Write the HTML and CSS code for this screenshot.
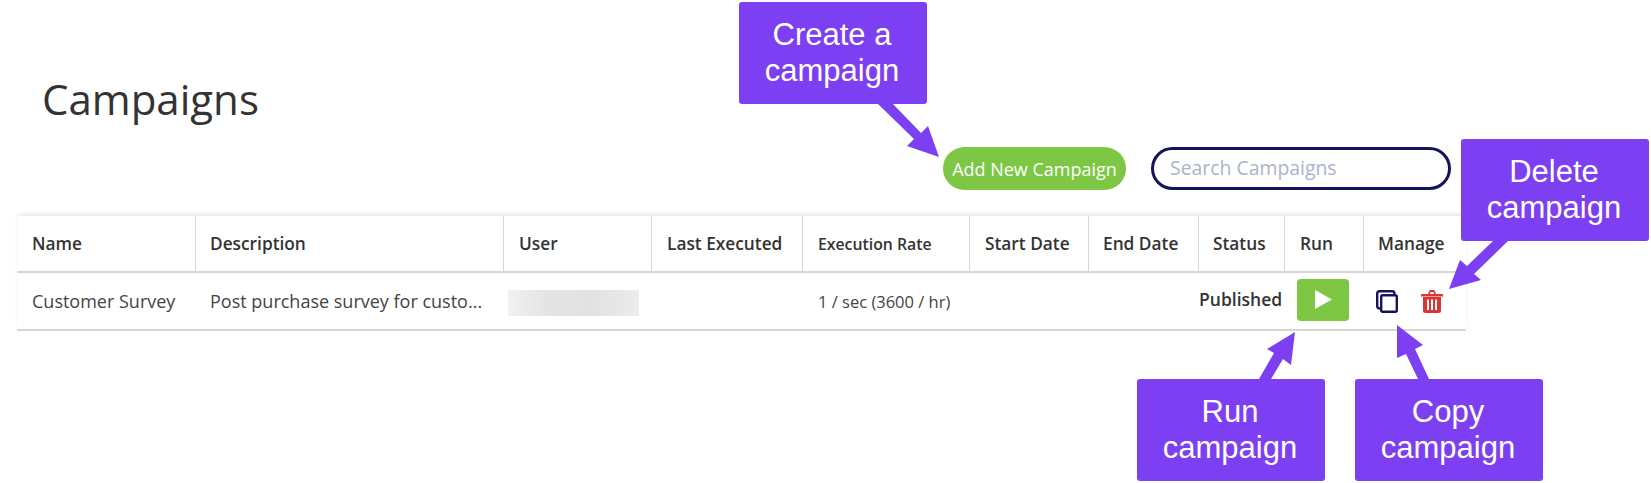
FILE: index.html
```html
<!DOCTYPE html>
<html lang="en">
<head>
<meta charset="utf-8">
<title>Campaigns</title>
<link rel="stylesheet" href="styles.css">
</head>
<body>
<main class="page">
  <h1 class="title">Campaigns</h1>
  <div class="toolbar">
    <button class="add-btn" type="button">Add New Campaign</button>
    <input class="search" type="text" placeholder="Search Campaigns">
  </div>
  <table class="table">
    <colgroup>
      <col class="c-name"><col class="c-desc"><col class="c-user"><col class="c-last"><col class="c-rate">
      <col class="c-start"><col class="c-end"><col class="c-status"><col class="c-run"><col class="c-manage">
    </colgroup>
    <thead>
      <tr>
        <th>Name</th><th class="desc">Description</th><th>User</th><th>Last Executed</th><th class="small">Execution Rate</th>
        <th>Start Date</th><th class="end">End Date</th><th class="end">Status</th><th>Run</th><th class="end">Manage</th>
      </tr>
    </thead>
    <tbody>
      <tr>
        <td>Customer Survey</td>
        <td class="desc">Post purchase survey for custo...</td>
        <td class="user-cell"><div class="blur-box"><div class="blur"></div></div></td>
        <td></td>
        <td class="rate">1 / sec (3600 / hr)</td>
        <td></td>
        <td></td>
        <td class="status">Published</td>
        <td class="run-cell">
          <button class="run-btn" type="button" aria-label="Run">
            <svg width="17" height="19" viewBox="0 0 17 19"><path d="M0 0 L17 9.5 L0 19 Z" fill="#fff"/></svg>
          </button>
        </td>
        <td class="manage-cell">
          <div class="manage">
            <svg class="ic-copy" width="22" height="23" viewBox="0 0 22 23" fill="none" stroke="#14145a" stroke-width="2.4">
              <path d="M4 18.5 H3.5 A2.5 2.5 0 0 1 1.2 16 V3.5 A2.5 2.5 0 0 1 3.5 1.2 H16 A2.5 2.5 0 0 1 18.5 3.5 V5"/>
              <rect x="5.2" y="5.2" width="15.6" height="16.6" rx="1.5"/>
            </svg>
            <svg class="ic-trash" width="22" height="23" viewBox="0 0 22 23">
              <path fill="#dc3535" d="M7 4 L8 1.2 Q8.4 0 9.7 0 H12.3 Q13.6 0 14 1.2 L15 4 H21 Q22 4 22 5 V6.4 H0 V5 Q0 4 1 4 Z M9 4 H13 L12.4 2 H9.6 Z"/>
              <path fill="#dc3535" d="M2 7 H20 V20.5 Q20 23 17.5 23 H4.5 Q2 23 2 20.5 Z"/>
              <path fill="#fff" d="M6 9.5 H8 V20 H6 Z M10 9.5 H12 V20 H10 Z M14 9.5 H16 V20 H14 Z"/>
            </svg>
          </div>
        </td>
      </tr>
    </tbody>
  </table>
</main>

<svg class="arrows" width="1651" height="483" viewBox="0 0 1651 483" aria-hidden="true">
  <polygon points="878,104 893,104 921,133 928,126 939,157 907,146 914,139"/>
  <polygon points="1493,241 1508,241 1474,274 1481,280 1449,289 1460,260 1467,266"/>
  <polygon points="1259,379 1271,379 1283,359 1291,365 1295,332 1267,349 1274,353"/>
  <polygon points="1397,325 1423,345 1415,349 1429,379 1418,379 1406,354 1397,358"/>
</svg>
<div class="callout callout-create">Create a<br>campaign</div>
<div class="callout callout-delete">Delete<br>campaign</div>
<div class="callout callout-run">Run<br>campaign</div>
<div class="callout callout-copy">Copy<br>campaign</div>
</body>
</html>
```
FILE: styles.css
```css
* { box-sizing: border-box; }
html, body { margin: 0; padding: 0; background: #fff; }
body {
  position: relative;
  width: 1651px;
  height: 483px;
  overflow: hidden;
  font-family: "Open Sans", sans-serif;
  color: #333;
}
.page { padding: 72px 185px 0 17px; }
.title {
  margin: 0 0 0 25px;
  height: 54px;
  font-size: 42px;
  line-height: 54px;
  font-weight: 400;
  color: #333;
}
.toolbar {
  display: flex;
  justify-content: flex-end;
  align-items: flex-start;
  gap: 25px;
  margin-top: 21px;
  padding-right: 15px;
  height: 43px;
}
.add-btn {
  width: 183px;
  height: 43px;
  padding: 0;
  border: 0;
  border-radius: 22px;
  background: #7dc744;
  color: #fff;
  font-family: "Open Sans", sans-serif;
  font-size: 18px;
  font-weight: 500;
  white-space: nowrap;
}
.search {
  width: 300px;
  height: 43px;
  padding: 0 16px 2px;
  border: 3px solid #14145a;
  border-radius: 22px;
  font-family: "Open Sans", sans-serif;
  font-size: 19.4px;
  outline: none;
}
.search::placeholder { color: #aab4c8; opacity: 1; }
.table {
  width: 1449px;
  margin-top: 26px;
  table-layout: fixed;
  border-collapse: separate;
  border-spacing: 0;
  box-shadow: 0 -3px 5px -2px rgba(0, 0, 0, .14);
}
.c-name { width: 179px; }
.c-desc { width: 308px; }
.c-user { width: 148px; }
.c-last { width: 151px; }
.c-rate { width: 167px; }
.c-start { width: 119px; }
.c-end { width: 110px; }
.c-status { width: 86px; }
.c-run { width: 79px; }
.c-manage { width: 102px; }
th {
  height: 57px;
  padding: 0 0 0 15px;
  border-right: 1px solid #d6d6d6;
  border-bottom: 2px solid #d6d6d6;
  text-align: left;
  font-size: 17.3px;
  font-weight: 600;
  color: #333;
  white-space: nowrap;
}
th:last-child { border-right: 0; }
th.desc, td.desc, th.end { padding-left: 14px; }
td {
  height: 58px;
  padding: 0 0 0 15px;
  border-bottom: 2px solid #d6d6d6;
  font-size: 18px;
  color: #444;
  white-space: nowrap;
}
th.small { font-size: 15.8px; }
td.rate { font-size: 16.5px; }
td.user-cell { padding: 3px 0 0 4px; }
.blur-box {
  width: 131px;
  height: 26px;
  overflow: hidden;
  background: #ededed;
}
.blur {
  width: 100%;
  height: 100%;
  background: linear-gradient(90deg, #f1f1f1 0%, #e4e4e4 30%, #e2e2e2 65%, #ececec 100%);
}
td.status {
  padding: 0 0 5px 0;
  font-size: 17.5px;
  font-weight: 600;
  color: #333;
}
td.run-cell { padding: 0 0 3px 12px; }
.run-btn {
  display: flex;
  align-items: center;
  justify-content: center;
  width: 52px;
  height: 42px;
  padding: 0;
  border: 0;
  border-radius: 4px;
  background: #7dc744;
}
td.manage-cell { padding: 0 0 0 12px; }
.manage { display: flex; align-items: center; gap: 23px; }
.manage svg { display: block; }
.arrows { position: absolute; left: 0; top: 0; pointer-events: none; }
.arrows polygon { fill: #7c3ff2; }
.callout {
  position: absolute;
  display: flex;
  align-items: center;
  justify-content: center;
  width: 188px;
  height: 102px;
  padding-right: 2px;
  border-radius: 3px;
  background: #7c3ff2;
  color: #fff;
  font-family: "Liberation Sans", Arial, sans-serif;
  font-size: 31px;
  line-height: 36px;
  text-align: center;
}
.callout-create { left: 739px; top: 2px; }
.callout-delete { left: 1461px; top: 139px; }
.callout-run { left: 1137px; top: 379px; }
.callout-copy { left: 1355px; top: 379px; }
```
